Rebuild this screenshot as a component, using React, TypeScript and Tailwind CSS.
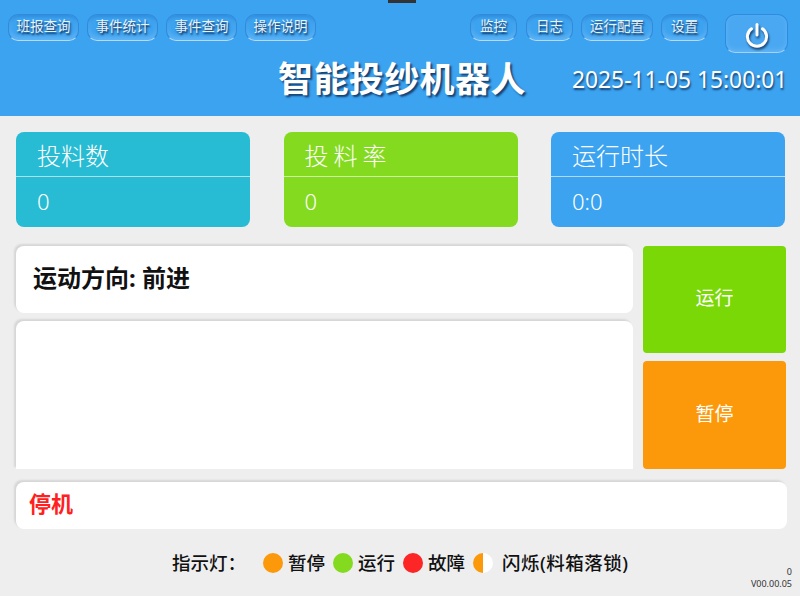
const font = "font-['Noto_Sans','Noto_Sans_CJK_SC',sans-serif]";

const navLeft = ["班报查询", "事件统计", "事件查询", "操作说明"];
const navRight = [
  { label: "监控", w: "w-[47px] mr-px" },
  { label: "日志", w: "w-[47px]" },
  { label: "运行配置", w: "w-[72px]" },
  { label: "设置", w: "w-[47px]" },
];

function NavButton({ label, w = "w-[71px]" }: { label: string; w?: string }) {
  return (
    <button
      className={`${w} h-[27px] pb-[2px] rounded-[10px] border border-[#2f8be0] border-b-[#b5dbf9] bg-[#3ca3f1] shadow-[inset_0_-3px_5px_rgba(255,255,255,0.2),inset_0_2px_3px_rgba(20,90,170,0.3)] text-[13.5px] leading-none text-[#e8f3fb] whitespace-nowrap [text-shadow:1px_2px_2px_rgba(5,30,70,0.95)]`}
    >
      {label}
    </button>
  );
}

function StatCard({ title, value, bg, spaced }: { title: string; value: string; bg: string; spaced?: boolean }) {
  return (
    <div className={`${bg} h-[95px] rounded-lg text-white flex flex-col`}>
      <div className={`h-[44px] pl-[21px] pt-1 flex items-center text-[24px] font-light ${spaced ? "tracking-[5px]" : ""}`}>
        {title}
      </div>
      <div className="h-px bg-white/60" />
      <div className="flex-1 pl-[21px] pb-[2px] flex items-center text-[22px] font-light">{value}</div>
    </div>
  );
}

function Lamp({ color }: { color: string }) {
  return <span className={`w-5 h-5 rounded-full ${color}`} />;
}

export default function App() {
  return (
    <div className={`${font} relative w-[800px] h-[596px] overflow-hidden bg-[#eeeeef] flex flex-col`}>
      {/* top notch */}
      <div className="absolute top-0 left-[388px] w-[28px] h-[3px] bg-[#333333]" />

      <header className="h-[116px] bg-[#3ca3f1] pt-[14px] shrink-0">
        <div className="flex items-start pl-2 pr-3">
          <div className="flex gap-2">
            {navLeft.map((item) => (
              <NavButton key={item} label={item} />
            ))}
          </div>
          <div className="ml-auto flex gap-2">
            {navRight.map((item) => (
              <NavButton key={item.label} label={item.label} w={item.w} />
            ))}
          </div>
          <button className="ml-[17px] w-[63px] h-[39px] rounded-[10px] border border-[#2f8be0] border-b-[#a5d3f8] bg-[#4aa8f2] shadow-[inset_0_-2px_4px_rgba(255,255,255,0.15)] flex items-center justify-center">
            <svg
              width="26"
              height="26"
              viewBox="0 0 26 26"
              fill="none"
              stroke="white"
              strokeWidth="3"
              strokeLinecap="round"
              className="mt-[3px] drop-shadow-[1px_2px_1px_rgba(10,40,80,0.8)]"
            >
              <path d="M13 2.5V13" />
              <path d="M7.5 6.8a9.6 9.6 0 1 0 11 0" />
            </svg>
          </button>
        </div>
        <div className="flex items-center mt-[3px] pl-[278px]">
          <h1 className="text-[35px] tracking-[0.4px] leading-[44px] font-bold text-white [text-shadow:2px_2px_2px_rgba(10,40,80,0.8)] w-[248px] whitespace-nowrap">
            智能投纱机器人
          </h1>
          <div className="ml-[46px] mt-[2px] text-[22.8px] leading-[44px] text-white whitespace-nowrap [text-shadow:1px_2px_2px_rgba(10,40,80,0.8)]">
            2025-11-05 15:00:01
          </div>
        </div>
      </header>

      <section className="grid grid-cols-[234px_234px_234px] gap-x-[33.5px] mt-4 pl-4">
        <StatCard title="投料数" value="0" bg="bg-[#27bcd3]" />
        <StatCard title="投料率" value="0" bg="bg-[#84da1e]" spaced />
        <StatCard title="运行时长" value="0:0" bg="bg-[#3ca3f1]" />
      </section>

      <main className="flex mt-[19px] pl-4 gap-[10px]">
        <div className="w-[617px] flex flex-col gap-2">
          <div className="h-[67px] pb-1 rounded-lg bg-white shadow-[-2px_-2px_2px_rgba(0,0,0,0.1)] pl-[17px] flex items-center text-[24px] font-bold text-[#111111]">
            运动方向: 前进
          </div>
          <div className="h-[148px] rounded-t-lg bg-white shadow-[-2px_-2px_2px_rgba(0,0,0,0.1)]" />
        </div>
        <div className="w-[143px] flex flex-col gap-2">
          <button className="h-[107px] pb-[2px] rounded bg-[#79d806] text-white text-[19px]">运行</button>
          <button className="h-[108px] pb-[2px] rounded bg-[#fc990b] text-white text-[19px]">暂停</button>
        </div>
      </main>

      <div className="ml-4 mt-[13px] w-[771px] h-[47px] pb-1 rounded-lg bg-white shadow-[-2px_-2px_2px_rgba(0,0,0,0.1)] pl-[13px] flex items-center text-[22px] font-bold text-[#ff2020]">
        停机
      </div>

      <footer className="flex items-start mt-[22px] pl-[172px] pr-2">
        <div className="flex items-center h-6 text-[18.5px] font-medium text-[#111111] whitespace-nowrap">
          <span className="w-[91px]">指示灯：</span>
          <Lamp color="bg-[#fc990b]" />
          <span className="ml-[5px] w-[45px]">暂停</span>
          <Lamp color="bg-[#84da1e]" />
          <span className="ml-[5px] w-[45px]">运行</span>
          <Lamp color="bg-[#fc2626]" />
          <span className="ml-[5px] w-[45px]">故障</span>
          <span className="w-5 h-5 rounded-full bg-[linear-gradient(90deg,#fc990b_50%,#ffffff_50%)]" />
          <span className="ml-[9px] tracking-[0.5px]">闪烁(料箱落锁)</span>
        </div>
        <div className="ml-auto mt-[15px] text-right text-[9px] leading-[12px] text-[#333333]">
          <div>0</div>
          <div>V00.00.05</div>
        </div>
      </footer>
    </div>
  );
}
